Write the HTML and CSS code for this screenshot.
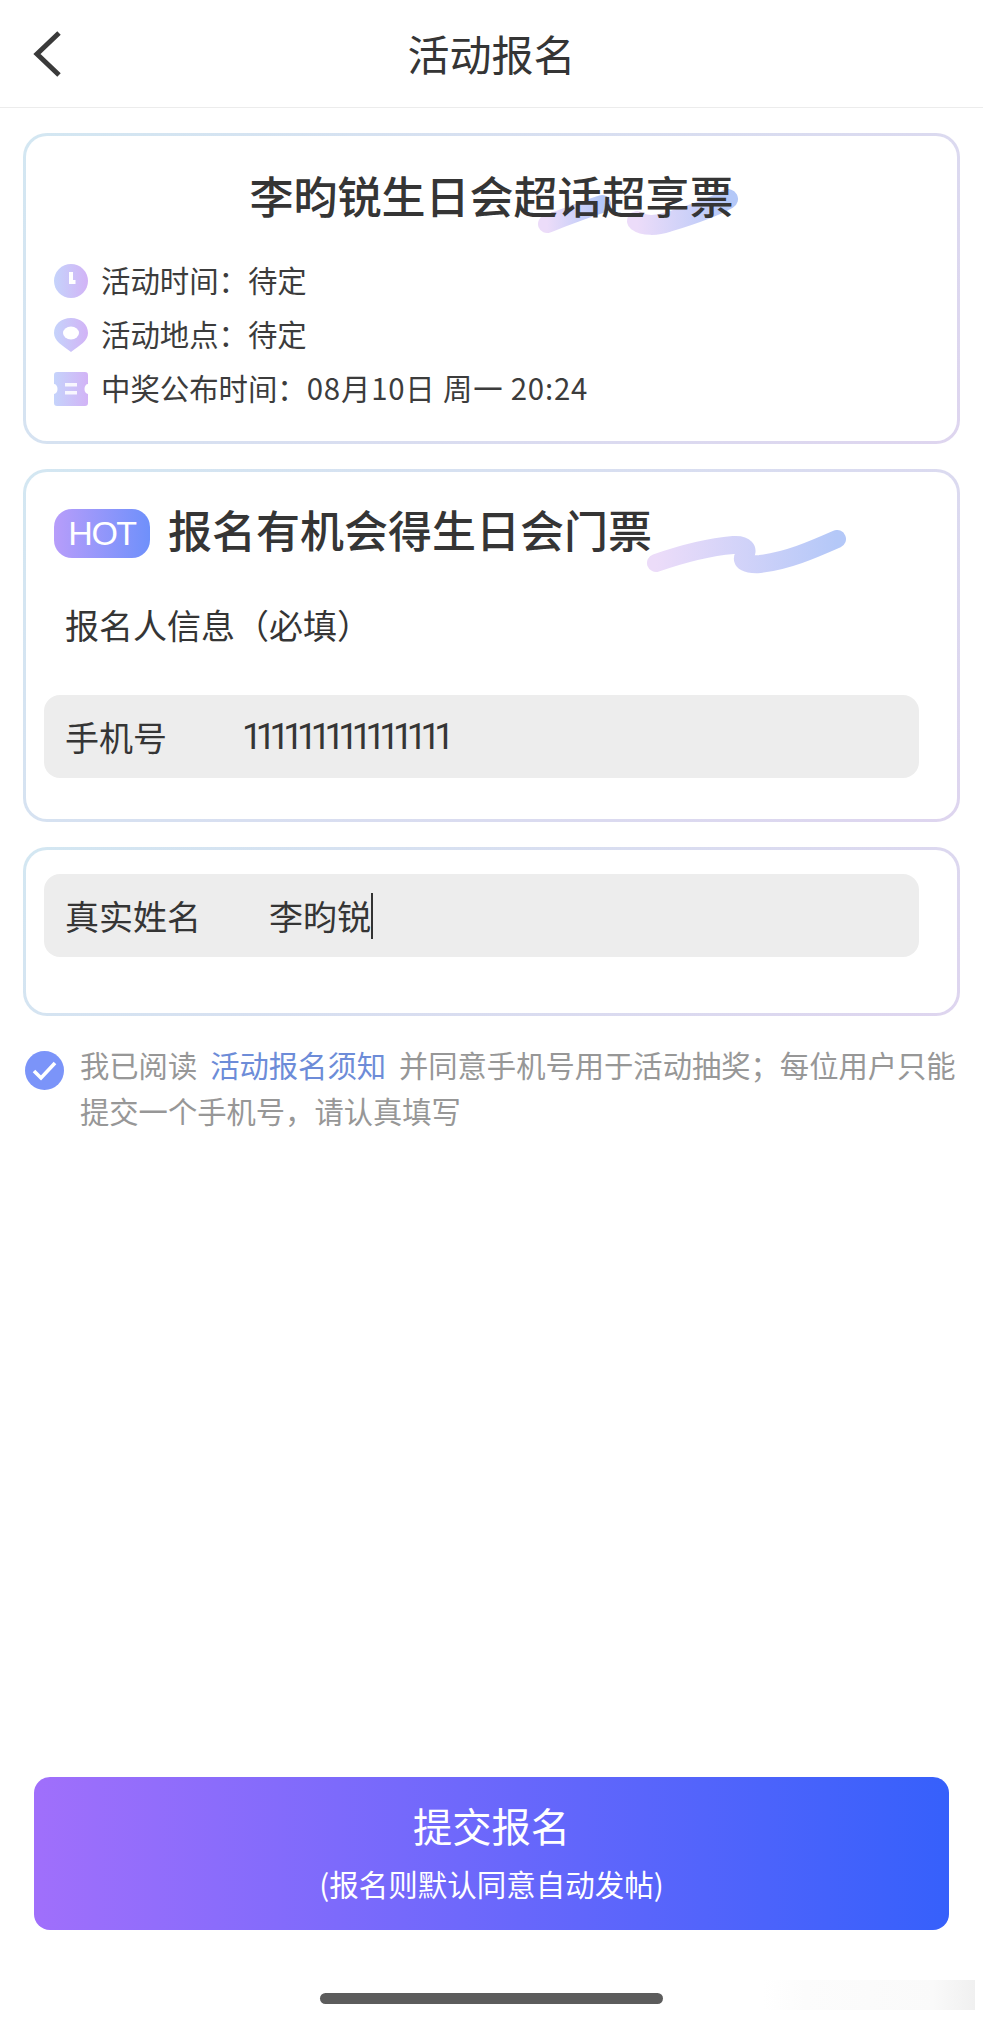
FILE: index.html
```html
<!DOCTYPE html>
<html lang="zh-CN">
<head>
<meta charset="utf-8">
<title>活动报名</title>
<link rel="stylesheet" href="styles.css">
</head>
<body>
<div class="page">
  <header class="nav">
    <svg class="back" viewBox="0 0 30 46" aria-hidden="true"><path d="M26 2 L4 23 L26 44" fill="none" stroke="#3a3a3a" stroke-width="5"/></svg>
    <h1 class="nav-title">活动报名</h1>
  </header>
  <main class="main">
    <section class="card card-info">
      <div class="event-title">
        <svg class="squiggle squiggle-event" viewBox="0 0 200 46" aria-hidden="true">
          <defs><linearGradient id="sq1" x1="0" x2="1" y1="0" y2="0"><stop offset="0" stop-color="#ecdcf9"/><stop offset="1" stop-color="#b4c8f8"/></linearGradient></defs>
          <path d="M9 35 C30 27 48 20 64 15" fill="none" stroke="url(#sq1)" stroke-width="18" stroke-linecap="round"/>
          <path d="M99 32 C106 37 118 37 130 33 C150 27 172 20 190 10" fill="none" stroke="url(#sq1)" stroke-width="20" stroke-linecap="round"/>
        </svg>
        <span class="event-text">李昀锐生日会超话超享票</span>
      </div>
      <ul class="facts">
        <li class="fact">
          <svg class="fact-icon" viewBox="0 0 34 34" aria-hidden="true">
            <defs><linearGradient id="ig" x1="0" x2="1" y1="0" y2="0"><stop offset="0" stop-color="#c5d3fb"/><stop offset="1" stop-color="#d2b3f6"/></linearGradient></defs>
            <circle cx="17" cy="17" r="17" fill="url(#ig)"/>
            <path d="M17 8 V18 H21.500" fill="none" stroke="#fff" stroke-width="4"/>
          </svg>
          <span class="fact-text">活动时间：待定</span>
        </li>
        <li class="fact">
          <svg class="fact-icon" viewBox="0 0 34 34" aria-hidden="true">
            <path d="M17 0 C27 0 34 6.500 34 15 C34 23 26 27 17 34 C8 27 0 23 0 15 C0 6.500 7 0 17 0 Z" fill="url(#ig)"/>
            <ellipse cx="17" cy="15" rx="8" ry="6.500" fill="#fff"/>
          </svg>
          <span class="fact-text">活动地点：待定</span>
        </li>
        <li class="fact">
          <svg class="fact-icon" viewBox="0 0 34 34" aria-hidden="true">
            <path d="M3 0 H31 A3 3 0 0 1 34 3 V12 A3.500 5 0 0 0 34 22 V31 A3 3 0 0 1 31 34 H3 A3 3 0 0 1 0 31 V22 A3.500 5 0 0 0 0 12 V3 A3 3 0 0 1 3 0 Z" fill="url(#ig)"/>
            <rect x="11" y="11" width="12" height="3.500" fill="#fff" opacity=".85"/>
            <rect x="11" y="19" width="12" height="3.500" fill="#fff" opacity=".85"/>
          </svg>
          <span class="fact-text">中奖公布时间：<span class="fact-date">08月10日 周一 20:24</span></span>
        </li>
      </ul>
    </section>

    <section class="card card-form">
      <div class="hot-row">
        <span class="hot">HOT</span>
        <h2 class="hot-title">报名有机会得生日会门票</h2>
        <svg class="squiggle squiggle-hot" viewBox="0 0 200 46" aria-hidden="true">
          <path d="M9 33 C35 24 62 17 86 15 C98 14 103 20 97 26 C93 31 100 35 113 34 C140 31 165 20 190 9" fill="none" stroke="url(#sq1)" stroke-width="18" stroke-linecap="round"/>
        </svg>
      </div>
      <p class="form-label">报名人信息（必填）</p>
      <div class="field field-phone">
        <span class="field-label">手机号</span>
        <span class="field-value phone-value">111111111111111</span>
      </div>
    </section>

    <section class="card card-name">
      <div class="field field-name">
        <span class="field-label">真实姓名</span>
        <span class="field-value name-value">李昀锐<i class="caret"></i></span>
      </div>
    </section>

    <div class="agree">
      <svg class="check" viewBox="0 0 39 39" aria-hidden="true">
        <circle cx="19.500" cy="19.500" r="19.500" fill="#7b94f9"/>
        <path d="M9 20 L16 27 L30 12" fill="none" stroke="#fff" stroke-width="3.600"/>
      </svg>
      <p class="agree-text">我已阅读<a class="agree-link">活动报名须知</a>并同意手机号用于活动抽奖；每位用户只能提交一个手机号，请认真填写</p>
    </div>
  </main>
  <footer class="footer">
    <button class="submit">
      <span class="submit-title">提交报名</span>
      <span class="submit-sub">(报名则默认同意自动发帖)</span>
    </button>
    <div class="home-wrap"><span class="home"></span></div>
    <span class="smear"></span>
  </footer>
</div>
</body>
</html>
```
FILE: styles.css
```css
* { box-sizing: border-box; }
html, body { margin: 0; padding: 0; background: #fff; }
body { font-family: "Noto Sans CJK SC", "Noto Sans", sans-serif; color: #353535; }
.page { width: 983px; height: 2020px; display: flex; flex-direction: column; overflow: hidden; }

.nav { height: 108px; border-bottom: 1px solid #ececec; display: flex; align-items: center; justify-content: center; position: relative; flex: none; }
.back { position: absolute; left: 33px; top: 31px; width: 30px; height: 46px; }
.nav-title { margin: 0; padding-bottom: 2px; font-size: 42px; font-weight: 400; line-height: 1; }

.main { padding: 25px 23px 0; flex: 1; display: flex; flex-direction: column; }
.card { border: 3px solid transparent; border-radius: 24px; background: linear-gradient(#fff, #fff) padding-box, linear-gradient(135deg, #d3e7f2, #ded5ef) border-box; }
.card-info { height: 311px; padding: 24px 28px 0; margin-bottom: 25px; }
.card-form { height: 353px; padding: 37px 18px 0; margin-bottom: 25px; }
.card-name { height: 169px; padding: 24px 18px 0; margin-bottom: 35px; }

.event-title { position: relative; text-align: center; height: 70px; }
.event-text { position: relative; font-size: 44px; font-weight: 500; line-height: 70px; }
.squiggle { position: absolute; width: 200px; height: 46px; }
.squiggle-event { left: 484px; top: 29px; }

.facts { list-style: none; margin: 34px 0 0; padding: 0; display: flex; flex-direction: column; gap: 20px; }
.fact { display: flex; align-items: center; height: 34px; gap: 13px; font-size: 29.400px; line-height: 34px; color: #3c3c3c; }
.fact-text { padding-bottom: 4px; }
.fact-date { letter-spacing: .8px; }
.fact-icon { width: 34px; height: 34px; flex: none; }

.hot-row { display: flex; align-items: center; gap: 18px; position: relative; padding-left: 10px; height: 49px; }
.hot { width: 96px; height: 49px; border-radius: 18px; background: linear-gradient(90deg, #b79dfa, #6f90fb); color: #fff; font-family: "Liberation Sans", sans-serif; font-size: 34px; letter-spacing: -1.500px; line-height: 49px; text-align: center; }
.hot-title { position: relative; margin: 0; padding-bottom: 8px; font-size: 44px; font-weight: 500; line-height: 49px; white-space: nowrap; }
.squiggle-hot { left: 603px; top: 21px; }

.form-label { margin: 43px 0 0 21px; font-size: 34px; line-height: 48px; white-space: nowrap; }
.field { height: 83px; border-radius: 16px; background: #ededed; width: 875px; display: flex; align-items: center; padding-left: 21px; font-size: 34px; }
.field-phone { margin-top: 46px; }
.field-label { flex: none; }
.phone-value { margin-left: 75px; font-family: Roboto, sans-serif; font-size: 36px; letter-spacing: -6.500px; }
.name-value { margin-left: 68px; position: relative; display: flex; align-items: center; }
.caret { display: block; width: 2px; height: 46px; background: #333; }

.agree { display: flex; gap: 16px; padding-left: 2px; }
.check { width: 39px; height: 39px; flex: none; }
.agree-text { margin: -10px 0 0; font-size: 29.300px; line-height: 46px; color: #979797; width: 880px; }
.agree-link { color: #6d8cd8; margin: 0 13px; }

.footer { flex: none; padding: 0 34px; position: relative; }
.submit { display: flex; flex-direction: column; align-items: center; width: 915px; height: 153px; border: 0; border-radius: 16px; background: linear-gradient(90deg, #a06ffb, #3660fb); color: #fff; font-family: inherit; padding: 21px 0 0; }
.submit-title { font-size: 39.300px; line-height: 54px; }
.submit-sub { font-size: 29.500px; line-height: 44px; margin-top: 9px; }
.home-wrap { height: 90px; display: flex; justify-content: center; padding-top: 63px; }
.home { width: 343px; height: 11px; border-radius: 6px; background: #5c5c5c; }
.smear { position: absolute; right: 8px; bottom: 10px; width: 212px; height: 30px; background: linear-gradient(90deg, #fff, #fcfcfc 20%, #fafafa 80%, #f0f0f0); }
```
